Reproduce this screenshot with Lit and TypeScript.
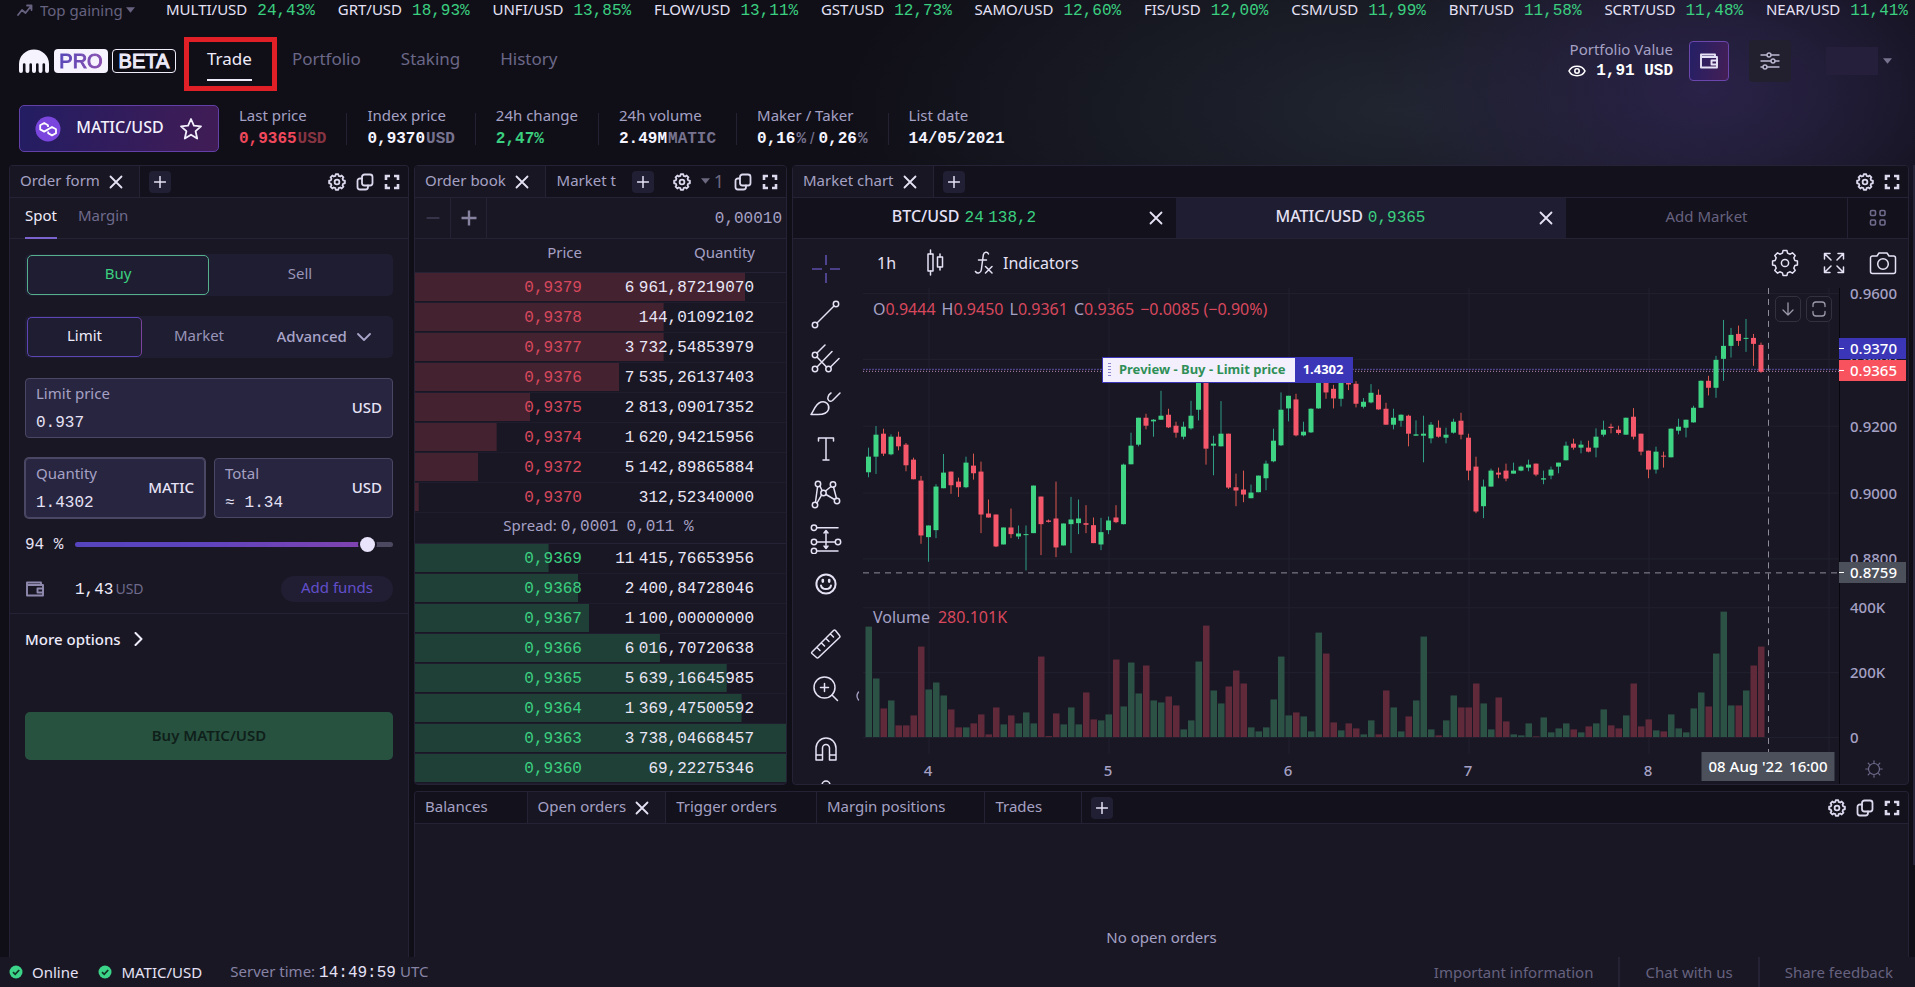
import { LitElement, html, svg, css, nothing } from "lit";
import { customElement, property, state } from "lit/decorators.js";

type Candle = [dir: "g" | "r", high: number, top: number, bottom: number, low: number, volume: number];

/* ---------- data ---------- */

const TICKER: [string, string][] = [
  ["MULTI/USD", "24,43%"], ["GRT/USD", "18,93%"], ["UNFI/USD", "13,85%"], ["FLOW/USD", "13,11%"],
  ["GST/USD", "12,73%"], ["SAMO/USD", "12,60%"], ["FIS/USD", "12,00%"], ["CSM/USD", "11,99%"],
  ["BNT/USD", "11,58%"], ["SCRT/USD", "11,48%"], ["NEAR/USD", "11,41%"],
];

const ASKS: [string, string, number][] = [
  ["0,9379", "6 961,87219070", 89], ["0,9378", "144,01092102", 67], ["0,9377", "3 732,54853979", 67],
  ["0,9376", "7 535,26137403", 55], ["0,9375", "2 813,09017352", 31], ["0,9374", "1 620,94215956", 22],
  ["0,9372", "5 142,89865884", 17], ["0,9370", "312,52340000", 1],
];

const BIDS: [string, string, number][] = [
  ["0,9369", "11 415,76653956", 36], ["0,9368", "2 400,84728046", 44], ["0,9367", "1 100,00000000", 47],
  ["0,9366", "6 016,70720638", 66], ["0,9365", "5 639,16645985", 84], ["0,9364", "1 369,47500592", 88],
  ["0,9363", "3 738,04668457", 100], ["0,9360", "69,22275346", 100],
];

/* Prices and volumes are kept in thirds of a chart unit. */
const CANDLES: Candle[] = [
  ["g", 774, 801, 848, 863, 332], ["g", 709, 735, 801, 853, 176], ["r", 717, 732, 792, 799, 86],
  ["g", 734, 741, 794, 797, 110], ["r", 726, 741, 770, 782, 35], ["r", 760, 765, 827, 845, 35],
  ["r", 804, 810, 869, 869, 65], ["r", 859, 873, 1038, 1063, 272], ["g", 1008, 1008, 1043, 1117, 143],
  ["g", 884, 891, 1022, 1046, 164], ["g", 793, 849, 896, 896, 125], ["r", 846, 846, 887, 913, 83],
  ["r", 864, 876, 893, 922, 29], ["g", 801, 819, 893, 896, 29], ["r", 792, 828, 851, 870, 41],
  ["r", 816, 846, 975, 1031, 68], ["r", 930, 972, 984, 984, 8], ["r", 975, 975, 1071, 1073, 89],
  ["g", 1014, 1014, 1065, 1065, 38], ["r", 957, 1014, 1034, 1046, 65], ["g", 1008, 1032, 1041, 1049, 41],
  ["g", 1008, 1034, 1037, 1143, 74], ["g", 888, 888, 1031, 1031, 41], ["r", 921, 921, 1004, 1097, 242],
  ["r", 990, 993, 997, 999, 3], ["r", 876, 987, 1074, 1103, 71], ["g", 1002, 1002, 1068, 1068, 38],
  ["g", 922, 990, 1004, 1091, 89], ["g", 930, 987, 1001, 1034, 38], ["r", 947, 1001, 1006, 1031, 134],
  ["r", 984, 1007, 1061, 1061, 53], ["g", 985, 1028, 1065, 1082, 50], ["g", 981, 993, 1022, 1034, 68],
  ["r", 947, 984, 998, 1001, 233], ["g", 822, 825, 1004, 1005, 92], ["g", 729, 768, 824, 824, 224],
  ["g", 684, 684, 765, 770, 131], ["r", 672, 684, 708, 719, 215], ["g", 688, 690, 695, 741, 110],
  ["g", 603, 678, 690, 690, 104], ["r", 657, 675, 713, 715, 122], ["r", 696, 708, 729, 744, 95],
  ["g", 696, 711, 741, 749, 23], ["g", 633, 678, 716, 720, 50], ["g", 560, 575, 660, 692, 227],
  ["r", 560, 575, 777, 825, 335], ["g", 738, 762, 768, 857, 140], ["g", 634, 732, 770, 770, 101],
  ["r", 732, 732, 894, 898, 152], ["r", 852, 893, 903, 950, 200], ["r", 843, 900, 915, 938, 161],
  ["g", 885, 909, 926, 926, 29], ["g", 858, 858, 908, 908, 17], ["g", 813, 822, 866, 902, 29],
  ["g", 717, 753, 815, 818, 113], ["g", 608, 660, 767, 769, 242], ["g", 618, 618, 656, 695, 65],
  ["r", 612, 629, 737, 740, 74], ["g", 696, 726, 737, 740, 62], ["g", 656, 657, 728, 730, 17],
  ["g", 545, 575, 656, 657, 314], ["r", 550, 575, 608, 627, 251], ["r", 585, 597, 626, 656, 44],
  ["g", 550, 575, 627, 650, 20], ["r", 570, 579, 584, 601, 41], ["r", 574, 582, 642, 653, 26],
  ["g", 625, 636, 651, 656, 8], ["g", 583, 609, 638, 641, 50], ["r", 599, 615, 659, 660, 8],
  ["r", 639, 657, 705, 705, 140], ["g", 657, 684, 705, 719, 89], ["g", 674, 675, 693, 711, 17],
  ["r", 675, 678, 732, 770, 62], ["g", 692, 734, 738, 738, 110], ["g", 678, 732, 738, 818, 302],
  ["g", 697, 705, 746, 761, 23], ["r", 692, 714, 741, 744, 5], ["g", 714, 735, 744, 761, 50],
  ["g", 687, 696, 729, 732, 125], ["r", 669, 693, 735, 749, 89], ["r", 732, 744, 843, 872, 89],
  ["r", 801, 831, 966, 971, 161], ["g", 870, 891, 950, 986, 101], ["g", 837, 843, 891, 891, 23],
  ["r", 834, 849, 855, 866, 119], ["r", 822, 843, 867, 875, 47], ["g", 819, 843, 852, 852, 8],
  ["g", 828, 831, 843, 845, 5], ["g", 810, 825, 834, 845, 41], ["r", 822, 822, 855, 860, 2],
  ["g", 843, 866, 870, 884, 59], ["g", 831, 840, 858, 869, 14], ["g", 819, 819, 831, 851, 26],
  ["g", 756, 768, 812, 812, 41], ["r", 747, 762, 774, 780, 23], ["g", 753, 765, 774, 791, 14],
  ["r", 753, 774, 786, 788, 32], ["g", 716, 741, 774, 803, 41], ["g", 693, 720, 735, 741, 83],
  ["r", 702, 711, 715, 731, 35], ["r", 708, 720, 730, 735, 26], ["g", 684, 684, 735, 735, 65],
  ["r", 655, 681, 741, 749, 161], ["r", 732, 732, 786, 797, 32], ["r", 783, 783, 840, 866, 53],
  ["g", 771, 786, 840, 852, 20], ["r", 786, 798, 801, 834, 17], ["g", 716, 717, 803, 803, 68],
  ["g", 687, 711, 723, 734, 26], ["g", 690, 690, 714, 743, 14], ["g", 648, 654, 698, 699, 86],
  ["g", 572, 573, 654, 654, 134], ["r", 558, 573, 594, 617, 92], ["g", 498, 510, 594, 624, 251],
  ["g", 390, 468, 507, 573, 377], ["g", 414, 435, 468, 503, 95], ["r", 407, 432, 453, 468, 95],
  ["g", 387, 444, 447, 486, 140], ["r", 432, 444, 462, 528, 215], ["r", 458, 465, 546, 549, 272],
];

const PLOT_W = 976;
const PLOT_H = 467;
const VOLUME_BASE = 450;
const GRID_X = [66, 246, 426, 606, 786, 966];
const GRID_Y = [5, 71, 138, 205, 271, 320, 385, 450];
const PRICE_LABELS: [number, string][] = [
  [5, "0.9600"], [71, "0.9400"], [138, "0.9200"], [205, "0.9000"], [271, "0.8800"],
  [320, "400K"], [385, "200K"], [450, "0"],
];
const DAY_LABELS: [number, string][] = [[65, "4"], [245, "5"], [425, "6"], [605, "7"], [785, "8"]];

const pctX = (x: number) => `${(x / PLOT_W) * 100}%`;
const pctY = (y: number) => `${(y / PLOT_H) * 100}%`;

/* ---------- icons ---------- */

const line = (w: number, h: number, body: unknown, stroke = 1.5) => html`<svg
  width=${w} height=${h} viewBox="0 0 ${w} ${h}" fill="none" stroke="currentColor"
  stroke-width=${stroke} stroke-linecap="round" stroke-linejoin="round" aria-hidden="true">${body}</svg>`;

const gearPath = (c: number, r: number, teeth: number, depth: number) => {
  const pts: string[] = [];
  const step = (Math.PI * 2) / teeth;
  for (let i = 0; i < teeth; i++) {
    const a = i * step - Math.PI / 2;
    for (const [off, rad] of [[-0.2, r], [0.2, r], [0.32, r - depth], [0.68, r - depth]] as [number, number][]) {
      const t = a + off * step;
      pts.push(`${(c + rad * Math.cos(t)).toFixed(2)} ${(c + rad * Math.sin(t)).toFixed(2)}`);
    }
  }
  return `M${pts.join("L")}Z`;
};

const icons = {
  gear: line(18, 18, svg`<path d=${gearPath(9, 8, 8, 1.6)} /><circle cx="9" cy="9" r="2.4" />`, 1.8),
  gearLarge: line(28, 28, svg`<path d=${gearPath(14, 12.6, 8, 2.4)} /><circle cx="14" cy="14" r="3.6" />`, 1.5),
  copy: line(18, 18, svg`<rect x="6" y="1.5" width="10.5" height="11" rx="2.5" /><path d="M6 5.5H4A2.5 2.5 0 0 0 1.5 8v6A2.5 2.5 0 0 0 4 16.5h5.5A2.5 2.5 0 0 0 12 14v-1.5" />`, 1.8),
  expand: line(16, 16, svg`<path d="M2 6V2H6M10 2H14V6M14 10V14H10M6 14H2V10" stroke-linecap="butt" stroke-linejoin="miter" />`, 2.6),
  close: line(14, 14, svg`<path d="M1.5 1.5L12.5 12.5M12.5 1.5L1.5 12.5" />`, 1.8),
  plus: line(12, 12, svg`<path d="M6 .5V11.5M.5 6H11.5" />`, 1.5),
  plusBold: line(16, 16, svg`<path d="M8 .5V15.5M.5 8H15.5" stroke-linecap="butt" />`, 2.4),
  minus: line(14, 4, svg`<path d="M1 2H13" />`, 1),
  trend: line(16, 12, svg`<path d="M1 11L5 6L8.5 9L14.5 1.5M10 1.5H14.5V6" />`, 1.8),
  wallet: line(20, 20, svg`<path d="M2 3.5H16V6M2 3.5V16.5H18V6H2.5" /><rect x="12.5" y="9.5" width="5.5" height="4" />`, 1.9),
  sliders: line(20, 18, svg`<path d="M1 3H7M11 3H19M1 9H11M15 9H19M1 15H3M7 15H19" /><circle cx="9" cy="3" r="2" /><circle cx="13" cy="9" r="2" /><circle cx="5" cy="15" r="2" />`, 1.4),
  eye: line(18, 12, svg`<path d="M1 6C4-.3 14-.3 17 6C14 12.3 4 12.3 1 6Z" /><circle cx="9" cy="6" r="2.2" />`, 1.6),
  star: line(24, 24, svg`<path d="M12 2L14.9 8.7L22 9.4L16.6 14.2L18.2 21.5L12 17.7L5.8 21.5L7.4 14.2L2 9.4L9.1 8.7Z" />`, 1.8),
  grid: line(18, 18, svg`<rect x="1.5" y="1.5" width="5" height="5" rx="1.2" /><rect x="11" y="1.5" width="5" height="5" rx="1.2" /><rect x="1.5" y="11" width="5" height="5" rx="1.2" /><rect x="11" y="11" width="5" height="5" rx="1.2" />`, 1.6),
  chevronDown: line(14, 10, svg`<path d="M1 2L7 8L13 2" />`, 1.8),
  chevronRight: line(9, 14, svg`<path d="M1.5 1L7.5 7L1.5 13" />`, 2),
  caret: html`<svg width="9" height="6" viewBox="0 0 10 6" aria-hidden="true"><path d="M0 0H10L5 6Z" fill="currentColor" /></svg>`,
  collapse: line(6, 10, svg`<path d="M4.5 1Q1.5 5 4.5 9" />`, 1.3),
  candles: line(20, 28, svg`<path d="M5.5 1V5M5.5 22V26M15 5V8M15 18V21" /><rect x="3" y="5" width="5" height="17" /><rect x="12.5" y="8" width="5" height="10" />`, 1.5),
  fx: line(20, 24, svg`<path d="M14.5 3C13.5 .5 10 .6 9.3 4L7.3 19C6.8 22.5 3 23 1.5 20.5M4.5 9H12.5M11.5 15.5L18 22M18 15.5L11.5 22" />`, 1.5),
  fullscreen: line(22, 22, svg`<path d="M1.5 7V1.5H7M1.5 1.5L8 8M15 1.5H20.5V7M20.5 1.5L14 8M20.5 15V20.5H15M20.5 20.5L14 14M7 20.5H1.5V15M1.5 20.5L8 14" />`, 1.5),
  camera: line(28, 24, svg`<path d="M1.5 7A2 2 0 0 1 3.5 5H8L10 2H18L20 5H24.5A2 2 0 0 1 26.5 7V20.5A2 2 0 0 1 24.5 22.5H3.5A2 2 0 0 1 1.5 20.5Z" /><circle cx="14" cy="13" r="5.3" />`, 1.5),
  arrowDown: line(12, 14, svg`<path d="M6 1V13M1 8L6 13L11 8" />`, 1.3),
  frame: line(14, 16, svg`<path d="M1 5.5V4A3 3 0 0 1 4 1H10A3 3 0 0 1 13 4V5.5M1 10.5V12A3 3 0 0 0 4 15H10A3 3 0 0 0 13 12V10.5" />`, 1.3),
  sun: line(18, 18, svg`<circle cx="9" cy="9" r="5.5" /><path d="M9 .8V2.5M9 15.5V17.2M.8 9H2.5M15.5 9H17.2M3.2 3.2L4.3 4.3M13.7 13.7L14.8 14.8M3.2 14.8L4.3 13.7M13.7 4.3L14.8 3.2" />`, 1.2),
  check: html`<svg width="14" height="14" viewBox="0 0 14 14" aria-hidden="true"><circle cx="7" cy="7" r="6.5" fill="#3bd488" /><path d="M4 7.2L6.2 9.3L10.2 5" fill="none" stroke="#123325" stroke-width="1.8" /></svg>`,
  matic: html`<svg width="26" height="26" viewBox="0 0 26 26" aria-hidden="true"><circle cx="13" cy="13" r="12.5" fill="#7b46dd" /><path fill="none" stroke="#fff" stroke-width="1.8" stroke-linejoin="round" d="M13 11V9.2L9.2 7L5.2 9.2V13.4L9.2 15.6L17 11L21 13.2V17.2L17 19.4L13.2 17.2V15.4" /></svg>`,
  kraken: html`<svg width="32" height="24" viewBox="0 0 32 24" aria-hidden="true"><path fill="#f6f3ff" d="M1 22V15A15 14.5 0 0 1 31 15V22A1.95 1.95 0 0 1 27.1 22V15.5A1.3 1.3 0 0 0 24.5 15.5V22A1.95 1.95 0 0 1 20.6 22V15.5A1.3 1.3 0 0 0 18 15.5V22A1.95 1.95 0 0 1 14 22V15.5A1.3 1.3 0 0 0 11.4 15.5V22A1.95 1.95 0 0 1 7.5 22V15.5A1.3 1.3 0 0 0 4.9 15.5V22A1.95 1.95 0 0 1 1 22Z" /></svg>`,
};

const TOOL_GROUPS: [string, unknown][][] = [
  [
    ["Crosshair", line(30, 30, svg`<path d="M15 1V11M15 19V29M1 15H11M19 15H29" stroke-linecap="butt" />`, 1.6)],
    ["Trend line", line(30, 30, svg`<circle cx="4" cy="26" r="2.7" /><circle cx="25" cy="5" r="2.7" /><path d="M6 24L23 7" />`)],
    ["Pitchfork", line(30, 30, svg`<circle cx="4" cy="11" r="2.7" /><circle cx="4" cy="25" r="2.7" /><circle cx="17.5" cy="25" r="2.7" /><path d="M6 9L14 1M6 23L21 7.5M19.5 23L28 14.5M6 13L15.5 23" />`)],
    ["Brush", line(32, 26, svg`<path d="M1 23.5C4 20 5 13 11 11C16 9.5 20 14 18.5 18.5C17 23 12 23.5 8 23.5ZM30 2L22.5 9.5C19.5 11.5 17 8.5 18 6Q18.5 3.5 21 2" />`)],
    ["Text", line(20, 26, svg`<path d="M2.5 5V2H17.5V5M10 2V24M7 24H13" />`)],
    ["Patterns", line(30, 30, svg`<circle cx="7" cy="5" r="2.7" /><circle cx="22" cy="5.5" r="2.7" /><circle cx="12.5" cy="14" r="2.7" /><circle cx="4" cy="26" r="2.7" /><circle cx="26" cy="22" r="2.7" /><path d="M6.5 8L4.5 23M9 7L11 11.5M14.5 12L20 7.5M22.5 8L25.5 19.5M10.5 16.2L6 24M15 15.5L23.5 20.5" />`)],
    ["Prediction", line(32, 30, svg`<circle cx="4" cy="3.7" r="2.7" /><circle cx="4" cy="18" r="2.7" /><circle cx="28" cy="18" r="2.7" /><circle cx="4" cy="27" r="2.7" /><path d="M7 3.7H28M7 18H25M7 27H28M16 7V24M14 9L16 6.5L18 9M14 22L16 24.5L18 22" />`)],
    ["Icons", line(24, 24, svg`<circle cx="12" cy="12" r="9.6" /><path d="M7 13.5C8 18.3 16 18.3 17 13.5" /><path d="M8.8 8V9.6M15.2 8V9.6" stroke-width="2.6" />`, 2)],
  ],
  [
    ["Measure", line(32, 32, svg`<path d="M2 24L23.5 2.5Q24.5 1.5 25.5 2.5L29.5 7.5Q30.5 8.5 29.5 9.5L8.5 29.5Q7.5 30.5 6.5 29.5L2 25.5Q1.2 24.7 2 24ZM7 19.5L10 22.5M11.5 15L14.5 18M16 10.5L19 13.5M20.5 6L23.5 9" />`)],
    ["Zoom in", line(28, 28, svg`<circle cx="12.5" cy="12.5" r="10.5" /><path d="M20 20L25.5 25.5M12.5 8.5V16.5M8.5 12.5H16.5" />`)],
  ],
  [
    ["Magnet", line(24, 26, svg`<path d="M2 24V12A10 10 0 0 1 22 12V24H15.5V12A3.5 3.5 0 0 0 8.5 12V24ZM2 19H8.5M15.5 19H22" />`)],
    ["Lock", line(22, 28, svg`<path d="M7 10V5A4 4 0 0 1 15 5V10M2 10H20V26H2Z" />`)],
  ],
];

/* ---------- shared styles ---------- */

const base = css`
  * { box-sizing: border-box; }
  button, select, input {
    font: inherit; color: inherit; background: none; border: 0; margin: 0; padding: 0; outline: 0;
    appearance: none; border-radius: 0;
  }
  button { display: inline-flex; align-items: center; justify-content: center; cursor: pointer; }
  a { color: inherit; text-decoration: none; }
  svg { display: block; flex: none; }
  .mono { font-family: "Liberation Mono", monospace; font-size: 16px; }
  .sp { font-family: "Liberation Sans", sans-serif; }
  .green { color: #3bcf80; }
  .red { color: #d8485d; }
`;

/* Groups of thousands are parted by a narrow space. */
const amount = (text: string) =>
  text.split(" ").map((part, i) => html`${i ? html`<span class="sp"> </span>` : nothing}${part}`);

/* ---------- panel with tab bar ---------- */

@customElement("dock-panel")
class DockPanel extends LitElement {
  @property({ attribute: false }) tabs: string[] = [];
  @property({ type: Number }) active = 0;
  @property({ attribute: false }) tools: string[] = [];
  @property({ type: Boolean }) clip = false;

  static styles = [base, css`
    :host { display: flex; flex-direction: column; min-width: 0; min-height: 0; background: #191724; border: 1px solid #252236; border-radius: 4px; overflow: hidden; }
    .bar { display: flex; align-items: center; flex: none; height: 32px; background: #13111b; border-bottom: 1px solid #252236; color: #a5a1c4; }
    .tab { display: flex; align-items: center; align-self: stretch; gap: 9px; padding: 0 16px 0 10px; border-right: 1px solid #252236; white-space: nowrap; }
    .tab.on { background: #181622; }
    .label { padding-bottom: 3px; }
    .close { width: 14px; height: 14px; color: #e6e2f6; }
    .tab.cut { border-right: 0; padding-right: 0; flex: 0 1 77px; min-width: 0; }
    .cut .label { overflow: hidden; width: 61px; }
    .add { width: 22px; height: 22px; margin: 0 9px; border-radius: 4px; background: #211f33; color: #e6e2f6; flex: none; }
    .tools { display: flex; align-items: center; gap: 10px; margin-left: auto; padding-right: 8px; color: #dcd8ee; }
    .count { gap: 4px; color: #6b6880; font-size: 18px; height: 20px; padding-bottom: 2px; }
    .body { flex: 1; min-height: 0; display: flex; flex-direction: column; }
  `];

  private tool(name: string) {
    if (name === "gear") return html`<button aria-label="Panel settings">${icons.gear}</button>`;
    if (name === "count") return html`<button class="count" aria-label="Linked group 1">${icons.caret}<span>1</span></button>`;
    if (name === "copy") return html`<button aria-label="Duplicate panel">${icons.copy}</button>`;
    return html`<button aria-label="Expand panel">${icons.expand}</button>`;
  }

  render() {
    return html`
      <div class="bar" role="tablist">
        ${this.tabs.map((name, i) => html`
          <div class="tab ${i === this.active ? "on" : ""} ${this.clip && i ? "cut" : ""}">
            <button class="label" role="tab" aria-selected=${i === this.active}>${name}</button>
            ${i === this.active
              ? html`<button class="close" aria-label="Close ${name}">${icons.close}</button>`
              : this.clip ? nothing : html`<span class="close"></span>`}
          </div>`)}
        <button class="add" aria-label="Add tab">${icons.plus}</button>
        <div class="tools">${this.tools.map((t) => this.tool(t))}</div>
      </div>
      <div class="body"><slot></slot></div>`;
  }
}

/* ---------- order form ---------- */

@customElement("order-form")
class OrderForm extends LitElement {
  @state() private share = 94;

  static styles = [base, css`
    :host { display: block; color: #e6e2f6; }
    .kinds { display: flex; gap: 21px; height: 41px; padding: 0 15px; border-bottom: 1px solid #252236; }
    .kind { color: #6f6b8c; padding-bottom: 5px; border-bottom: 2px solid transparent; height: 41px; }
    .kind.on { color: #eeebfa; border-bottom-color: #7a63cc; }
    .fields { display: grid; gap: 20px; padding: 15px 15px 11px; border-bottom: 1px solid #252236; }
    .group { display: grid; height: 42px; padding: 1px 2px; border-radius: 5px; background: #1f1d31; color: #9995b8; }
    .sides { grid-template-columns: 1fr 1fr; }
    .types { grid-template-columns: 115px 1fr 135px; }
    .group button { border: 1px solid transparent; border-radius: 5px; padding-bottom: 4px; }
    .group .buy { border-color: #55b08c; color: #3bcf80; }
    .group .limit { border-color: #5d45b5; color: #eeebfa; border-right-color: #7b439c; }
    .advanced { display: flex; align-items: center; justify-content: center; gap: 2px; color: #a9a5ca; font-weight: 500; }
    .advanced select { width: 78px; padding-bottom: 2px; }
    .field { display: grid; grid-template-columns: 1fr auto; grid-template-rows: 25px 28px; height: 60px; padding: 2px 10px; background: #282540; border: 1px solid #4a4764; border-radius: 4px; min-width: 0; }
    .field label { color: #a5a1c4; line-height: 25px; }
    .field .unit { grid-column: 2; grid-row: 1 / 3; align-self: center; font-weight: 500; padding-bottom: 1px; }
    .field input { width: 100%; min-width: 0; height: 28px; padding-top: 6px; }
    .focus { box-shadow: 0 0 0 1px #4a4764; }
    .pair { display: grid; grid-template-columns: 180px 1fr; gap: 9px; }
    .approx { display: flex; gap: 10px; }
    .approx span { line-height: 22px; padding-top: 6px; }
    .range { display: grid; grid-template-columns: 40px 1fr; gap: 10px; align-items: center; height: 20px; margin-top: -5px; }
    .range label { padding-top: 2px; }
    .range input { width: 100%; height: 16px; }
    .range input::-webkit-slider-runnable-track { height: 5px; border-radius: 3px; background: linear-gradient(to right, #5644bf 0%, #5f44bf 40%, #8243ae var(--share), #4b4860 var(--share)); }
    .range input::-webkit-slider-thumb { appearance: none; width: 15px; height: 15px; margin-top: -5px; border-radius: 50%; background: #e9e3fb; box-shadow: 0 0 0 2px #191724; }
    .funds { display: grid; grid-template-columns: 40px 1fr 112px; gap: 10px; align-items: center; height: 26px; margin-top: 3px; color: #8f8aad; }
    .balance { color: #eeebfa; display: flex; align-items: baseline; gap: 2px; }
    .balance .cur { color: #6f6b8c; font-size: 14px; }
    .link { height: 26px; border-radius: 13px; background: #211e33; color: #624fcb; padding-bottom: 4px; }
    .more { margin: 13px 15px 61px; gap: 13px; font-weight: 500; color: #eeebfa; height: 24px; }
    .submit { display: flex; width: calc(100% - 30px); margin: 0 15px; height: 48px; border-radius: 5px; background: #285240; color: #0f201a; font-weight: 600; padding-bottom: 3px; }
  `];

  render() {
    return html`
      <div class="kinds">
        <button class="kind on">Spot</button>
        <button class="kind">Margin</button>
      </div>
      <div class="fields">
        <div class="group sides"><button class="buy">Buy</button><button>Sell</button></div>
        <div class="group types">
          <button class="limit">Limit</button><button>Market</button>
          <div class="advanced">
            <select aria-label="Advanced order type"><option>Advanced</option></select>${icons.chevronDown}
          </div>
        </div>
        <div class="field">
          <label for="price">Limit price</label><span class="unit">USD</span>
          <input id="price" class="mono" value="0.937" />
        </div>
        <div class="pair">
          <div class="field focus">
            <label for="qty">Quantity</label><span class="unit">MATIC</span>
            <input id="qty" class="mono" value="1.4302" />
          </div>
          <div class="field">
            <label for="total">Total</label><span class="unit">USD</span>
            <div class="approx"><span class="mono">≈</span><input id="total" class="mono" value="1.34" /></div>
          </div>
        </div>
        <div class="range">
          <label for="share" class="mono">${this.share} %</label>
          <input id="share" type="range" min="0" max="100" .value=${String(this.share)}
            style="--share:${this.share}%"
            @input=${(e: Event) => { this.share = Number((e.target as HTMLInputElement).value); }} />
        </div>
        <div class="funds">
          ${icons.wallet}
          <span class="balance"><span class="mono">1,43</span><span class="cur">USD</span></span>
          <button class="link">Add funds</button>
        </div>
      </div>
      <button class="more">More options ${icons.chevronRight}</button>
      <button class="submit">Buy MATIC/USD</button>`;
  }
}

/* ---------- order book ---------- */

@customElement("order-book")
class OrderBook extends LitElement {
  static styles = [base, css`
    :host { display: block; color: #a5a1c4; }
    .depth { display: flex; align-items: center; height: 41px; border-bottom: 1px solid #252236; padding-right: 4px; }
    .step { width: 36px; align-self: stretch; border-right: 1px solid #252236; color: #86829f; }
    .step:disabled { color: #55516c; }
    .depth output { margin-left: auto; padding-top: 1px; }
    table { width: 100%; border-collapse: collapse; table-layout: fixed; }
    th { font-weight: 400; text-align: right; padding: 0 0 6px; height: 33px; border-bottom: 1px solid #252236; }
    th:last-child { padding-right: 31px; }
    .c1 { width: 45%; }
    td { height: 30px; padding: 1px 0 0; text-align: right; border-bottom: 1px solid #1f1d2d; }
    td:last-child { padding-right: 32px; color: #e9e6f6; }
    tr.level { background-repeat: no-repeat; background-size: var(--depth) 28px; background-position: 0 1px; }
    tr.ask { background-image: linear-gradient(#452230, #452230); }
    tr.bid { background-image: linear-gradient(#1f4037, #1f4037); }
    td.spread:last-child { height: 31px; text-align: center; color: #a5a1c4; padding: 0 0 3px; border-bottom: 1px solid #252236; }
    .spread .mono { padding: 0 4px; }
  `];

  private level(kind: "ask" | "bid", [price, qty, depth]: [string, string, number]) {
    return html`<tr class="level ${kind}" style="--depth:${depth}%">
      <td class="mono ${kind === "ask" ? "red" : "green"}">${price}</td>
      <td class="mono">${amount(qty)}</td>
    </tr>`;
  }

  render() {
    return html`
      <div class="depth">
        <button class="step" disabled aria-label="Decrease grouping">${icons.minus}</button>
        <button class="step" aria-label="Increase grouping">${icons.plusBold}</button>
        <output class="mono">0,00010</output>
      </div>
      <table>
        <colgroup><col class="c1" /><col /></colgroup>
        <thead><tr><th>Price</th><th>Quantity</th></tr></thead>
        <tbody>
          ${ASKS.map((l) => this.level("ask", l))}
          <tr><td class="spread" colspan="2">Spread:<span class="mono">0,0001</span><span class="mono">0,011 %</span></td></tr>
          ${BIDS.map((l) => this.level("bid", l))}
        </tbody>
      </table>`;
  }
}

/* ---------- market chart ---------- */

@customElement("market-chart")
class MarketChart extends LitElement {
  static styles = [base, css`
    :host { display: flex; flex-direction: column; flex: 1; min-height: 0; color: #e6e2f6; }
    .markets { display: grid; grid-template-columns: 383fr 390fr 281fr 61px; height: 41px; flex: none; background: #13111b; border-bottom: 1px solid #252236; }
    .market { display: flex; align-items: center; padding-right: 13px; }
    .market.on { background: #1f1d31; }
    .name { flex: 1; font-weight: 500; font-size: 16px; height: 40px; margin-right: 14px; padding-bottom: 2px; }
    .name .pairing { display: flex; align-items: baseline; gap: 5px; }
    .name .mono { font-weight: 400; }
    .market .close { width: 14px; height: 14px; }
    .addm { color: #66627f; padding-bottom: 4px; }
    .layout { color: #6f6b8c; border-left: 1px solid #252236; }
    .area { flex: 1; min-height: 0; display: grid; grid-template-columns: 70px 1fr 69px; grid-template-rows: 49px 1fr 30px; }
    .side { grid-row: 1 / 4; display: flex; flex-direction: column; gap: 15px; padding: 7px 4px 0 0; overflow: hidden; position: relative; }
    .set { display: flex; flex-direction: column; flex: none; }
    .set button { height: 45px; flex: none; }
    .set button.on { color: #5c4fa8; }
    .fold { position: absolute; right: 3px; bottom: 83px; color: #a5a1c4; }
    .top { grid-column: 2 / 4; display: flex; align-items: center; padding: 0 11px 2px 14px; font-size: 16px; }
    .top .left { display: flex; align-items: center; gap: 29px; }
    .top .left button { gap: 9px; }
    .top .right { display: flex; align-items: center; gap: 24px; margin-left: auto; }
    .plot { position: relative; min-width: 0; min-height: 0; }
    .plot > svg { position: absolute; inset: 0; width: 100%; height: 100%; }
    .legend { position: absolute; left: 10px; top: 10px; display: flex; gap: 6px; font-size: 16px; color: #a5a1c4; line-height: 22px; }
    .legend.vol { top: 318px; gap: 8px; }
    .ctl { position: absolute; top: 8px; right: 7px; display: flex; gap: 5px; }
    .ctl button { width: 26px; height: 26px; border: 1px solid #34313f; border-radius: 5px; background: #191724; color: #9c99ab; }
    .order { position: absolute; left: 239px; top: 69px; display: flex; height: 26px; border: 1px solid #3b36b8; background: #f3effd; font-size: 13px; font-weight: 700; color: #2f8f57; align-items: center; }
    .order .grip { width: 3px; height: 14px; margin: 0 8px 0 5px; background: repeating-linear-gradient(#8d84cf 0 1px, transparent 1px 3px); }
    .order .text { padding: 0 9px 2px 0; }
    .order .size { align-self: stretch; display: flex; align-items: center; width: 57px; justify-content: center; background: #3b36b8; color: #fff; padding-bottom: 2px; }
    .prices { position: relative; border-left: 1px solid #08070d; color: #a5a1c4; }
    .prices span { position: absolute; left: 10px; line-height: 22px; margin-top: -11px; font-weight: 500; }
    .prices .tag { left: -1px; right: 2px; padding-left: 11px; line-height: 21px; margin-top: -10px; color: #fff; }
    .prices .tag::before { content: ""; position: absolute; left: 0; top: 10px; width: 5px; height: 1px; background: #fff; }
    .blue { background: #3b36b8; }
    .coral { background: #f9525f; }
    .gray { background: #4b505b; }
    .times { grid-column: 2; position: relative; color: #a5a1c4; }
    .times span { position: absolute; top: 5px; transform: translateX(-50%); line-height: 22px; font-weight: 500; }
    .times .stamp { top: -2px; color: #fff; line-height: 29px; width: 133px; display: flex; justify-content: space-between; padding: 0 7px; white-space: pre; }
    .zone { color: #6f6b8c; border-left: 1px solid #08070d; }
  `];

  private plot() {
    return svg`
      ${GRID_X.map((x) => svg`<line x1=${x} x2=${x} y1="0" y2=${PLOT_H} stroke="#22202e" />`)}
      ${GRID_Y.map((y) => svg`<line x1="0" x2=${PLOT_W} y1=${y + 0.5} y2=${y + 0.5} stroke="#22202e" />`)}
      ${CANDLES.map(([dir, , , , , volume], i) => svg`<rect x=${2.5 + 7.5 * i} y=${VOLUME_BASE - volume / 3}
        width="6.5" height=${volume / 3} fill=${dir === "g" ? "#2c5246" : "#602a3a"} />`)}
      <line x1="0" x2=${PLOT_W} y1="81.5" y2="81.5" stroke="#5a4ca0" stroke-dasharray="2 1" />
      <line x1="0" x2=${PLOT_W} y1="83.5" y2="83.5" stroke="#c08fb4" stroke-dasharray="1 2" />
      ${CANDLES.map(([dir, high, top, bottom, low], i) => {
        const x = 5.5 + 7.5 * i;
        const y = (t: number) => t / 3 - 98;
        return svg`<rect x=${x - 0.5} y=${y(high)} width="1" height=${(low - high) / 3} fill=${dir === "g" ? "#2f9c84" : "#d8574f"} />
          <rect x=${x - 2.5} y=${y(top)} width="5" height=${Math.max(1, (bottom - top) / 3)} fill=${dir === "g" ? "#3fd484" : "#f4566a"} />`;
      })}
      <line x1="0" x2=${PLOT_W} y1="285.5" y2="285.5" stroke="#8f8d9a" stroke-dasharray="6 5" />
      <line x1="905.5" x2="905.5" y1="0" y2=${PLOT_H} stroke="#8f8d9a" stroke-dasharray="6 5" />`;
  }

  render() {
    return html`
      <div class="markets">
        <div class="market">
          <button class="name"><span class="pairing">BTC/USD <span class="mono green">${amount("24 138,2")}</span></span></button>
          <button class="close" aria-label="Close BTC/USD">${icons.close}</button>
        </div>
        <div class="market on">
          <button class="name"><span class="pairing">MATIC/USD <span class="mono green">0,9365</span></span></button>
          <button class="close" aria-label="Close MATIC/USD">${icons.close}</button>
        </div>
        <button class="addm">Add Market</button>
        <button class="layout" aria-label="Chart layout">${icons.grid}</button>
      </div>
      <div class="area">
        <div class="side">
          ${TOOL_GROUPS.map((group, g) => html`<div class="set">
            ${group.map(([name, icon], i) => html`<button class=${g + i === 0 ? "on" : ""} aria-label=${name}>${icon}</button>`)}
          </div>`)}
          <button class="fold" aria-label="Hide drawing tools">${icons.collapse}</button>
        </div>
        <div class="top">
          <div class="left">
            <button>1h</button>
            <button aria-label="Candles">${icons.candles}</button>
            <button>${icons.fx} Indicators</button>
          </div>
          <div class="right">
            <button aria-label="Chart settings">${icons.gearLarge}</button>
            <button aria-label="Fullscreen">${icons.fullscreen}</button>
            <button aria-label="Take a snapshot">${icons.camera}</button>
          </div>
        </div>
        <div class="plot">
          <svg viewBox="0 0 ${PLOT_W} ${PLOT_H}" preserveAspectRatio="none" role="img" aria-label="MATIC/USD hourly candles">${this.plot()}</svg>
          <div class="legend">
            <span>O<span class="red">0.9444</span></span><span>H<span class="red">0.9450</span></span>
            <span>L<span class="red">0.9361</span></span><span>C<span class="red">0.9365</span></span>
            <span class="red">−0.0085 (−0.90%)</span>
          </div>
          <div class="legend vol"><span>Volume</span><span class="red">280.101K</span></div>
          <div class="ctl">
            <button aria-label="Move pane down">${icons.arrowDown}</button>
            <button aria-label="Maximize pane">${icons.frame}</button>
          </div>
          <div class="order"><span class="grip"></span><span class="text">Preview - Buy - Limit price</span><span class="size">1.4302</span></div>
        </div>
        <div class="prices">
          ${PRICE_LABELS.map(([y, text]) => html`<span style="top:${pctY(y)}">${text}</span>`)}
          <span class="tag blue" style="top:${pctY(60)}">0.9370</span>
          <span class="tag coral" style="top:${pctY(82)}">0.9365</span>
          <span class="tag gray" style="top:${pctY(285)}">0.8759</span>
        </div>
        <div class="times">
          ${DAY_LABELS.map(([x, text]) => html`<span style="left:${pctX(x)}">${text}</span>`)}
          <span class="stamp gray" style="left:${pctX(905)}"><time>08 Aug '22</time><time>16:00</time></span>
        </div>
        <button class="zone" aria-label="Axis settings">${icons.sun}</button>
      </div>`;
  }
}

/* ---------- page ---------- */

@customElement("app-root")
class AppRoot extends LitElement {
  static styles = [base, css`
    :host {
      display: flex; flex-direction: column; height: 100vh; overflow: hidden; position: relative;
      font-family: "Noto Sans", sans-serif; font-size: 15px; line-height: 20px; color: #e6e2f6;
      background:
        radial-gradient(ellipse 330px 200px at 89% 90px, #2a2248 0%, rgba(42, 34, 72, 0) 100%),
        radial-gradient(ellipse 560px 240px at 73% 110px, #20252f 0%, rgba(32, 37, 47, 0) 100%),
        #100f18;
    }
    .ticker { display: flex; align-items: center; height: 20px; flex: none; padding: 0 7px 0 17px; }
    .pick { display: flex; align-items: center; gap: 4px; width: 149px; flex: none; color: #66627f; }
    .pick svg:first-child { margin-right: 3px; }
    .pick select { width: 82px; }
    .tape { flex: 1; display: flex; justify-content: space-between; list-style: none; margin: 0; padding: 0; white-space: nowrap; min-width: 0; }
    .tape li { display: flex; align-items: baseline; gap: 10px; }
    .head { display: flex; align-items: center; height: 82px; flex: none; padding: 0 23px 0 18px; }
    .logo { display: flex; align-items: center; gap: 4px; margin-right: 31px; font-family: "Liberation Sans", sans-serif; font-size: 20px; line-height: 24px; }
    .pro { width: 54px; height: 24px; border-radius: 4px; background: #f6f3ff; text-align: center; }
    .pro span { background: linear-gradient(100deg, #5746b8, #8b4fae); background-clip: text; -webkit-background-clip: text; color: transparent; -webkit-text-stroke: 1px transparent; }
    .beta { width: 64px; height: 24px; border-radius: 4px; border: 1px solid #f0edfb; background: #0d0c14; text-align: center; line-height: 23px; -webkit-text-stroke: 1px #f0edfb; }
    nav { display: flex; gap: 40px; font-size: 17px; }
    nav a { position: relative; display: flex; align-items: center; height: 39px; color: #6b6787; border-bottom: 2px solid transparent; padding-bottom: 2px; }
    nav a.on { color: #eeebfa; border-bottom-color: #eeebfa; }
    .mark { position: absolute; inset: -5px -25px -12px -23px; border: 5px solid #e11f26; }
    .worth { margin-left: auto; text-align: right; color: #a5a1c4; padding-bottom: 2px; }
    .worth .sum { display: flex; align-items: center; justify-content: flex-end; gap: 10px; color: #fff; font-weight: 700; line-height: 22px; padding-top: 1px; }
    .wallet { width: 40px; height: 40px; margin-left: 16px; border: 1px solid #6a46ad; border-radius: 4px; background: linear-gradient(100deg, #241f66, #451f55); }
    .prefs { width: 42px; height: 42px; margin-left: 20px; border-radius: 4px; background: #22202f; color: #bcb8d2; }
    .user { margin-left: 35px; gap: 5px; color: #77738f; }
    .user .who { width: 52px; height: 28px; background: #251f3c; }
    .facts { display: flex; align-items: center; flex: none; padding: 3px 18px 13px 19px; }
    .symbol { width: 200px; height: 47px; margin-right: 20px; padding: 0 15px; justify-content: space-between; border: 1px solid #6240a8; border-radius: 5px; background: linear-gradient(100deg, #231d63, #411c55); font-weight: 500; font-size: 16px; color: #f3f0fd; }
    .symbol span { padding-bottom: 3px; }
    .fact { padding: 0 20px 4px 20px; gap: 2px; border-right: 1px solid #242132; line-height: 22px; color: #a5a1c4; height: 32px; display: flex; flex-direction: column; justify-content: center; white-space: nowrap; }
    .fact:first-of-type { padding-left: 0; }
    .fact:last-child { border: 0; }
    .fact .mono { font-weight: 700; display: flex; gap: 1px; color: #f6f4ff; }
    .fact .unit { color: #77738f; }
    .fact .green { color: #3bcf80; }
    .fact .down { color: #f0485c; }
    .fact .down .unit { color: #873442; }
    .fact .slash { padding: 0 3px; font-weight: 400; }
    .work { flex: 1; min-height: 0; display: grid; grid-template-columns: 400px 373px 1fr; grid-template-rows: 1fr 166px; gap: 6px 5px; padding: 0 6px 0 9px; }
    .form { grid-row: 1 / 3; border-bottom: 0; border-radius: 4px 4px 0 0; }
    .orders { grid-column: 2 / 4; border-bottom: 0; border-radius: 4px 4px 0 0; }
    .empty { flex: 1; display: flex; align-items: flex-end; justify-content: center; padding-bottom: 10px; color: #a5a1c4; }
    .rail { position: absolute; right: 0; top: 165px; width: 2px; height: 700px; background: #272439; }
    footer { display: flex; align-items: center; height: 30px; flex: none; padding: 0 22px 0 9px; background: #191724; color: #8783a5; }
    .ok { display: flex; align-items: center; gap: 9px; margin-right: 20px; color: #e6e2f6; }
    .clock { display: flex; align-items: baseline; gap: 4px; margin-left: 8px; }
    .clock .mono { color: #e6e2f6; }
    .help { margin-left: auto; display: flex; color: #66627f; }
    .help a { padding: 5px 25px; border-left: 2px solid #252236; }
    .help a:first-child { border: 0; }
    .help a:last-child { padding-right: 0; }
  `];

  render() {
    return html`
      <div class="ticker">
        <div class="pick">${icons.trend}<select aria-label="Ticker list"><option>Top gaining</option></select>${icons.caret}</div>
        <ul class="tape">
          ${TICKER.map(([pair, change]) => html`<li><span>${pair}</span><span class="mono green">${change}</span></li>`)}
        </ul>
      </div>
      <header class="head">
        <div class="logo">${icons.kraken}<span class="pro"><span>PRO</span></span><span class="beta">BETA</span></div>
        <nav>
          <a class="on" href="#trade">Trade<span class="mark"></span></a>
          <a href="#portfolio">Portfolio</a><a href="#staking">Staking</a><a href="#history">History</a>
        </nav>
        <div class="worth">
          <div>Portfolio Value</div>
          <div class="sum">${icons.eye}<span class="mono">1,91 USD</span></div>
        </div>
        <button class="wallet" aria-label="Wallet">${icons.wallet}</button>
        <button class="prefs" aria-label="Preferences">${icons.sliders}</button>
        <button class="user" aria-label="Account"><span class="who"></span>${icons.caret}</button>
      </header>
      <section class="facts">
        <button class="symbol">${icons.matic}<span>MATIC/USD</span>${icons.star}</button>
        <div class="fact"><span>Last price</span><span class="mono down">0,9365<span class="unit">USD</span></span></div>
        <div class="fact"><span>Index price</span><span class="mono">0,9370<span class="unit">USD</span></span></div>
        <div class="fact"><span>24h change</span><span class="mono green">2,47%</span></div>
        <div class="fact"><span>24h volume</span><span class="mono">2.49M<span class="unit">MATIC</span></span></div>
        <div class="fact"><span>Maker / Taker</span><span class="mono">0,16<span class="unit">%</span><span class="unit sp slash">/</span>0,26<span class="unit">%</span></span></div>
        <div class="fact"><span>List date</span><span class="mono">14/05/2021</span></div>
      </section>
      <main class="work">
        <dock-panel class="form" .tabs=${["Order form"]} .tools=${["gear", "copy", "expand"]}><order-form></order-form></dock-panel>
        <dock-panel .tabs=${["Order book", "Market t"]} clip .tools=${["gear", "count", "copy", "expand"]}><order-book></order-book></dock-panel>
        <dock-panel .tabs=${["Market chart"]} .tools=${["gear", "expand"]}><market-chart></market-chart></dock-panel>
        <dock-panel class="orders" .tabs=${["Balances", "Open orders", "Trigger orders", "Margin positions", "Trades"]} .active=${1}
          .tools=${["gear", "copy", "expand"]}><div class="empty">No open orders</div></dock-panel>
      </main>
      <div class="rail"></div>
      <footer>
        <span class="ok">${icons.check}Online</span>
        <span class="ok">${icons.check}MATIC/USD</span>
        <span class="clock">Server time: <span class="mono">14:49:59</span> UTC</span>
        <div class="help"><a href="#info">Important information</a><a href="#chat">Chat with us</a><a href="#feedback">Share feedback</a></div>
      </footer>`;
  }
}
